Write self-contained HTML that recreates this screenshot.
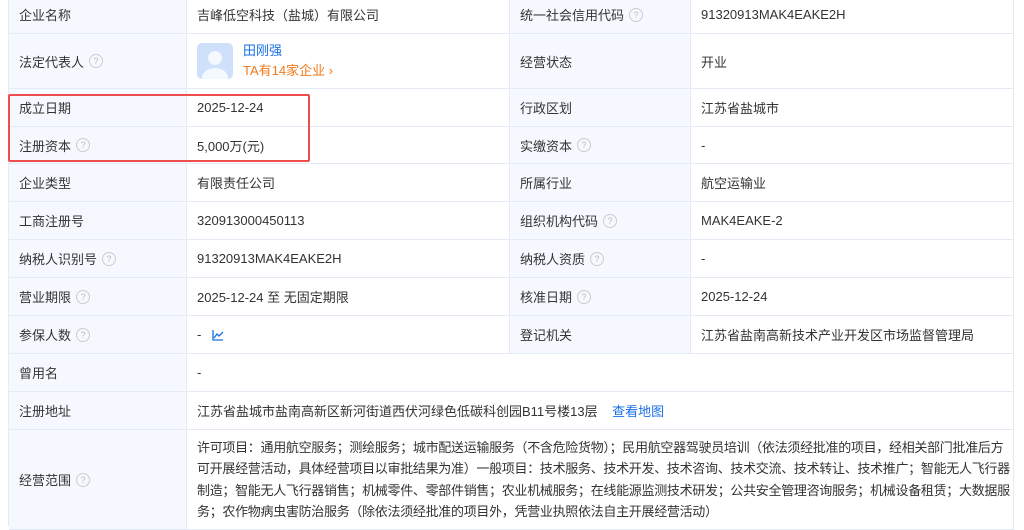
<!DOCTYPE html>
<html><head><meta charset="utf-8"><style>
body{margin:0;width:1024px;height:519px;overflow:hidden;background:#fff;font-family:"Liberation Sans","Noto Sans CJK SC",sans-serif;font-size:13px;color:#333}
.c{position:absolute;box-sizing:border-box;border-right:1px solid #e4ebf5;border-bottom:1px solid #e4ebf5;display:flex;align-items:center;padding-left:10px}
.l{background:#f5f8fe}
.q{display:inline-block;width:12px;height:12px;border:1px solid #ccc;border-radius:50%;color:#bbb;font-size:9px;line-height:12px;text-align:center;margin-left:5px}
a{color:#1a6fe6;text-decoration:none}
</style></head><body>
<div style="position:absolute;left:8px;top:-4px;width:1px;height:530px;background:#e4ebf5"></div>
<div class="c l" style="left:9px;top:-4px;width:178px;height:38px">企业名称</div>
<div class="c" style="left:187px;top:-4px;width:323px;height:38px">吉峰低空科技（盐城）有限公司</div>
<div class="c l" style="left:510px;top:-4px;width:181px;height:38px">统一社会信用代码<span class="q">?</span></div>
<div class="c" style="left:691px;top:-4px;width:323px;height:38px">91320913MAK4EAKE2H</div>

<div class="c l" style="left:9px;top:34px;width:178px;height:55px">法定代表人<span class="q">?</span></div>
<div class="c" style="left:187px;top:34px;width:323px;height:55px"><div style="width:36px;height:36px;border-radius:5px;background:#cfe0fb;position:relative;overflow:hidden;margin-right:10px"><div style="position:absolute;left:11px;top:8px;width:14px;height:14px;border-radius:50%;background:#f4f8ff"></div><div style="position:absolute;left:5px;top:25px;width:26px;height:20px;border-radius:50%;background:#f4f8ff"></div></div><div style="line-height:20px"><a>田刚强</a><br><span style="color:#f07a1a">TA有14家企业 ›</span></div></div>
<div class="c l" style="left:510px;top:34px;width:181px;height:55px">经营状态</div>
<div class="c" style="left:691px;top:34px;width:323px;height:55px">开业</div>

<div class="c l" style="left:9px;top:89px;width:178px;height:38px">成立日期</div>
<div class="c" style="left:187px;top:89px;width:323px;height:38px">2025-12-24</div>
<div class="c l" style="left:510px;top:89px;width:181px;height:38px">行政区划</div>
<div class="c" style="left:691px;top:89px;width:323px;height:38px">江苏省盐城市</div>

<div class="c l" style="left:9px;top:127px;width:178px;height:37px">注册资本<span class="q">?</span></div>
<div class="c" style="left:187px;top:127px;width:323px;height:37px">5,000万(元)</div>
<div class="c l" style="left:510px;top:127px;width:181px;height:37px">实缴资本<span class="q">?</span></div>
<div class="c" style="left:691px;top:127px;width:323px;height:37px">-</div>

<div class="c l" style="left:9px;top:164px;width:178px;height:38px">企业类型</div>
<div class="c" style="left:187px;top:164px;width:323px;height:38px">有限责任公司</div>
<div class="c l" style="left:510px;top:164px;width:181px;height:38px">所属行业</div>
<div class="c" style="left:691px;top:164px;width:323px;height:38px">航空运输业</div>

<div class="c l" style="left:9px;top:202px;width:178px;height:38px">工商注册号</div>
<div class="c" style="left:187px;top:202px;width:323px;height:38px">320913000450113</div>
<div class="c l" style="left:510px;top:202px;width:181px;height:38px">组织机构代码<span class="q">?</span></div>
<div class="c" style="left:691px;top:202px;width:323px;height:38px">MAK4EAKE-2</div>

<div class="c l" style="left:9px;top:240px;width:178px;height:38px">纳税人识别号<span class="q">?</span></div>
<div class="c" style="left:187px;top:240px;width:323px;height:38px">91320913MAK4EAKE2H</div>
<div class="c l" style="left:510px;top:240px;width:181px;height:38px">纳税人资质<span class="q">?</span></div>
<div class="c" style="left:691px;top:240px;width:323px;height:38px">-</div>

<div class="c l" style="left:9px;top:278px;width:178px;height:38px">营业期限<span class="q">?</span></div>
<div class="c" style="left:187px;top:278px;width:323px;height:38px">2025-12-24 至 无固定期限</div>
<div class="c l" style="left:510px;top:278px;width:181px;height:38px">核准日期<span class="q">?</span></div>
<div class="c" style="left:691px;top:278px;width:323px;height:38px">2025-12-24</div>

<div class="c l" style="left:9px;top:316px;width:178px;height:38px">参保人数<span class="q">?</span></div>
<div class="c" style="left:187px;top:316px;width:323px;height:38px">-&nbsp;&nbsp;&nbsp;<svg width="12" height="12" viewBox="0 0 12 12"><path d="M1 1V11H11M2 9L5 5L7 7L11 3" fill="none" stroke="#1a6fe6" stroke-width="1.3"/></svg></div>
<div class="c l" style="left:510px;top:316px;width:181px;height:38px">登记机关</div>
<div class="c" style="left:691px;top:316px;width:323px;height:38px">江苏省盐南高新技术产业开发区市场监督管理局</div>

<div class="c l" style="left:9px;top:354px;width:178px;height:38px">曾用名</div>
<div class="c" style="left:187px;top:354px;width:827px;height:38px">-</div>

<div class="c l" style="left:9px;top:392px;width:178px;height:38px">注册地址</div>
<div class="c" style="left:187px;top:392px;width:827px;height:38px">江苏省盐城市盐南高新区新河街道西伏河绿色低碳科创园B11号楼13层&nbsp;&nbsp;&nbsp;&nbsp;<a>查看地图</a></div>

<div class="c l" style="left:9px;top:430px;width:178px;height:100px">经营范围<span class="q">?</span></div>
<div class="c" style="left:187px;top:430px;width:827px;height:100px;align-items:flex-start;padding-top:7px;padding-right:0;line-height:21.3px;letter-spacing:-0.3px;white-space:nowrap;overflow:hidden">许可项目：通用航空服务；测绘服务；城市配送运输服务（不含危险货物）；民用航空器驾驶员培训（依法须经批准的项目，经相关部门批准后方<br>可开展经营活动，具体经营项目以审批结果为准）一般项目：技术服务、技术开发、技术咨询、技术交流、技术转让、技术推广；智能无人飞行器<br>制造；智能无人飞行器销售；机械零件、零部件销售；农业机械服务；在线能源监测技术研发；公共安全管理咨询服务；机械设备租赁；大数据服<br>务；农作物病虫害防治服务（除依法须经批准的项目外，凭营业执照依法自主开展经营活动）</div>

<div style="position:absolute;left:8px;top:94px;width:302px;height:68px;box-sizing:border-box;border:2px solid #ee4d4d;border-radius:2px"></div>
</body></html>
